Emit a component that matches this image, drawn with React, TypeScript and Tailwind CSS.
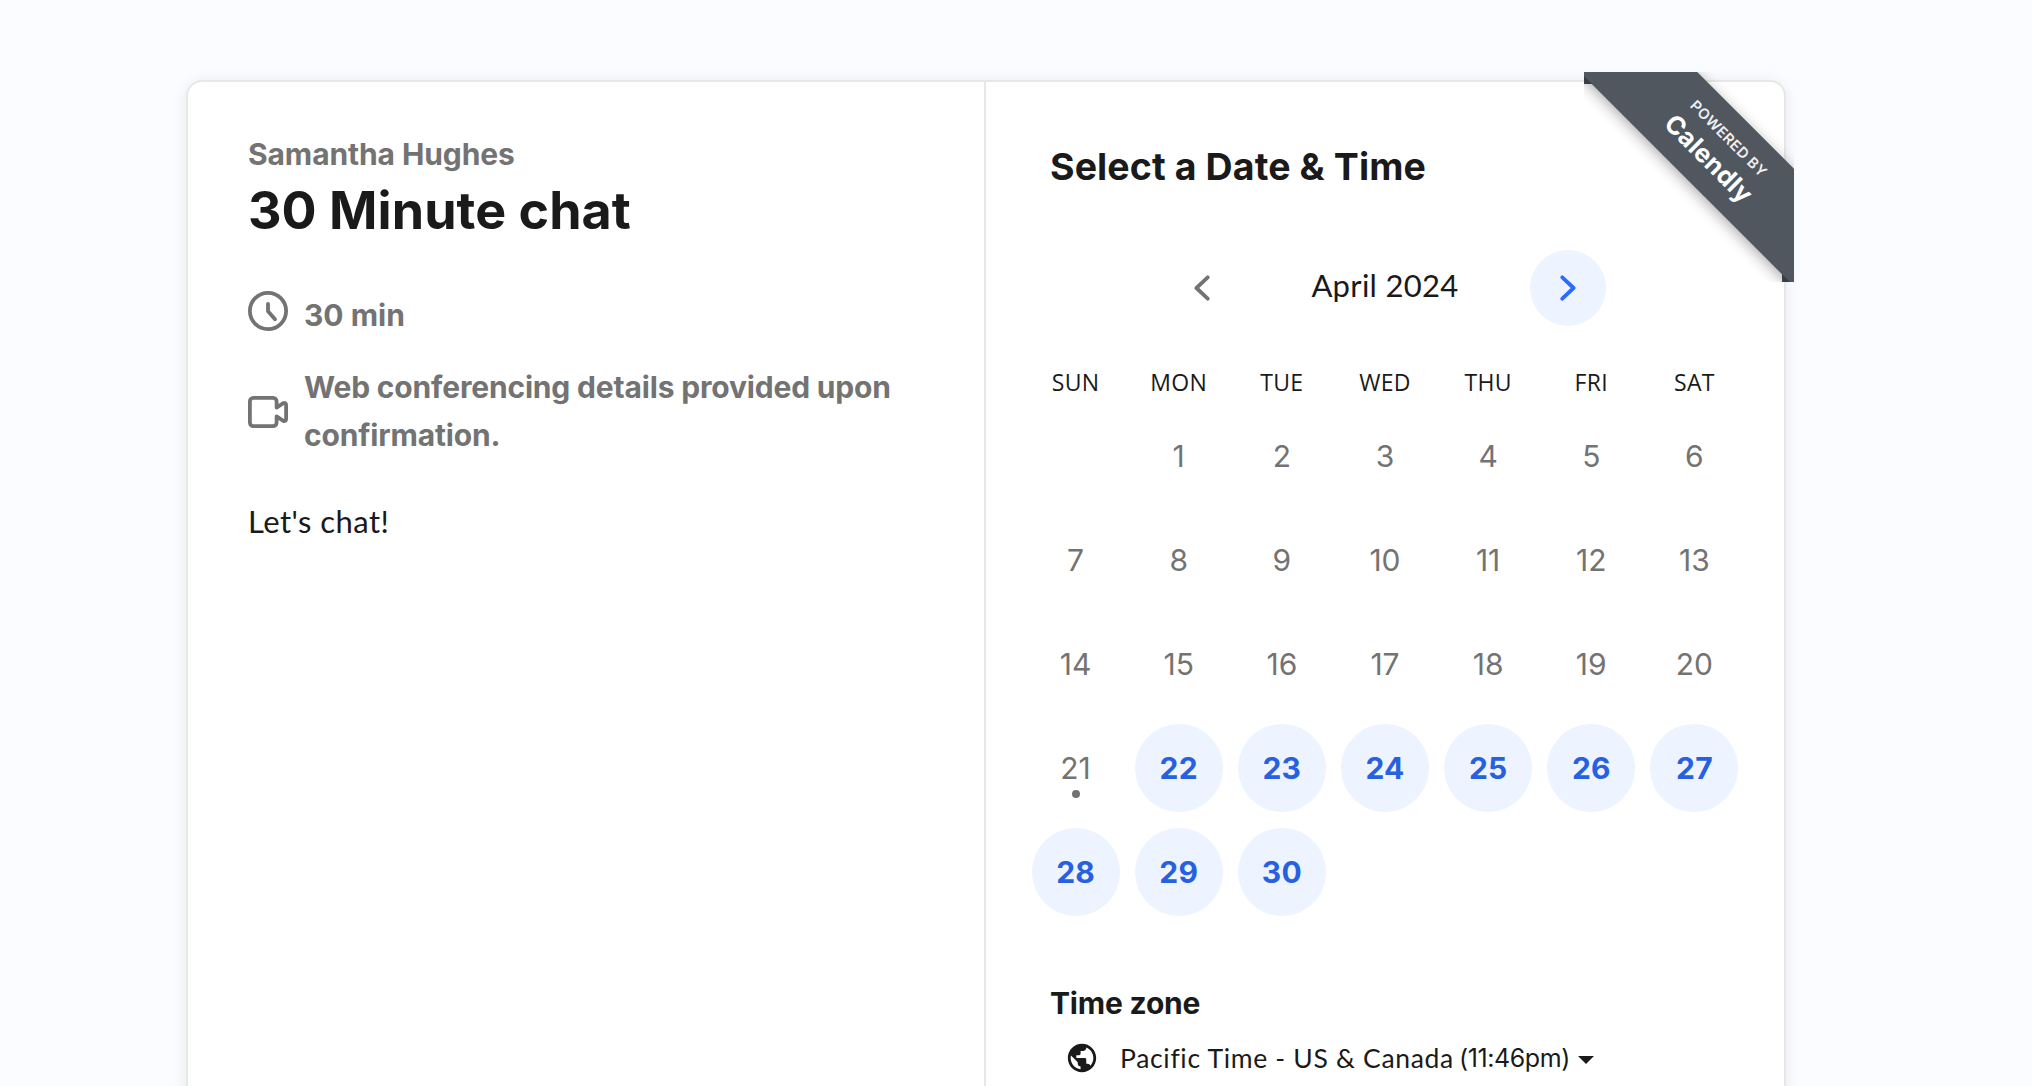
import React from "react";
import { MdPublic } from "react-icons/md";

const WEEKDAYS = ["SUN", "MON", "TUE", "WED", "THU", "FRI", "SAT"];
const DAYS = Array.from({ length: 30 }, (_, i) => i + 1);
const TODAY = 21;

function ClockIcon() {
  return (
    <svg className="size-10 shrink-0" viewBox="0 0 40 40" fill="none" stroke="currentColor" strokeWidth="3.8" strokeLinecap="round" strokeLinejoin="round">
      <circle cx="20" cy="20" r="18.1" />
      <path d="M20 13v7.2l7 8.1" />
    </svg>
  );
}

function VideoIcon() {
  return (
    <svg className="mt-[29px] size-10 shrink-0" viewBox="0 0 40 40" fill="none" stroke="currentColor" strokeWidth="3.8" strokeLinejoin="round">
      <path d="M5.4 5.9h19.7a3.5 3.5 0 0 1 3.5 3.5v6.2l6.7-4.4a1.8 1.8 0 0 1 2.8 1.5v14.6a1.8 1.8 0 0 1-2.8 1.5l-6.7-4.4v6.2a3.5 3.5 0 0 1-3.5 3.5H5.4a3.5 3.5 0 0 1-3.5-3.5V9.4a3.5 3.5 0 0 1 3.5-3.5z" />
    </svg>
  );
}

function Chevron({ flip = false }: { flip?: boolean }) {
  return (
    <svg className={flip ? "h-[26px] w-4 rotate-180" : "h-[26px] w-4"} viewBox="0 0 16 26" fill="none" stroke="currentColor" strokeWidth="3.8" strokeLinecap="round" strokeLinejoin="round">
      <path d="M2.3 2.3 13.6 13 2.3 23.7" />
    </svg>
  );
}

function Ribbon() {
  return (
    <div className="absolute -top-2.5 -right-2.5 size-[210px] overflow-hidden font-['Inter',sans-serif] text-white">
      <div className="absolute top-0 left-0 h-3 w-2 bg-[#474b54]" />
      <div className="absolute right-0 bottom-0 h-2 w-3 bg-[#474b54]" />
      <div className="absolute top-[36.6px] left-[-67.4px] flex h-[83px] w-[400px] rotate-45 flex-col items-center bg-[#50575e] shadow-[0_3px_14px_rgba(0,0,0,0.32)]">
        <div className="mt-[15px] h-5 text-[14.6px] leading-5 font-semibold tracking-[0.45px] whitespace-nowrap text-[#eef0f2]">POWERED BY</div>
        <div className="mt-[2px] h-8 text-[25.5px] leading-8 font-bold tracking-[0.3px]">Calendly</div>
      </div>
    </div>
  );
}

function Day({ day }: { day: number }) {
  const open = day > TODAY;
  return (
    <div className="flex h-[104px] items-center justify-center">
      <button
        className={
          open
            ? "relative size-[88px] rounded-full bg-[#edf4ff] text-[30px] font-bold tracking-[0.2px] text-[#2861df]"
            : "relative size-[88px] rounded-full text-[30px] font-normal text-[#737373]"
        }
      >
        {day}
        {day === TODAY && <span className="absolute bottom-3.5 left-10 size-2 rounded-full bg-[#737373]" />}
      </button>
    </div>
  );
}

function EventDetails() {
  return (
    <section className="w-[798px] shrink-0 border-r-2 border-[#e7e7e7] pt-[52px] pl-[60px]">
      <div className="font-['Inter',sans-serif] text-[30px] leading-10 font-bold tracking-[-0.1px] text-[#737373]">Samantha Hughes</div>
      <h1 className="mt-[7px] font-['Inter',sans-serif] text-[52px] leading-[60px] font-bold tracking-[0.05px]">30 Minute chat</h1>
      <div className="mt-[50px] flex gap-4 font-['Inter',sans-serif] text-[30px] leading-[48px] font-bold text-[#737373]">
        <ClockIcon />
        <span>30 min</span>
      </div>
      <div className="mt-6 flex gap-4 font-['Inter',sans-serif] text-[30px] leading-[48px] font-bold text-[#737373]">
        <VideoIcon />
        <span className="w-[620px] tracking-[-0.17px]">Web conferencing details provided upon confirmation.</span>
      </div>
      <p className="mt-[38px] text-[31px] leading-[48px] tracking-[0.45px]">Let's chat!</p>
    </section>
  );
}

function Scheduler() {
  return (
    <section className="flex-1 pt-[61px]">
      <h2 className="pl-16 font-['Inter',sans-serif] text-[37.5px] leading-[48px] font-bold tracking-[0.1px]">Select a Date &amp; Time</h2>
      <div className="mx-auto mt-[59px] flex h-[76px] w-[442px] items-center justify-between">
        <button className="flex size-[76px] items-center justify-center rounded-full text-[#737373]">
          <Chevron flip />
        </button>
        <span className="pb-1.5 text-[31px] tracking-[0.3px]">April 2024</span>
        <button className="flex size-[76px] items-center justify-center rounded-full bg-[#edf4ff] text-[#2b6bff]">
          <Chevron />
        </button>
      </div>
      <div className="mx-auto mt-10 grid w-[722px] grid-cols-7 text-center font-['Open_Sans',sans-serif] text-[23px] leading-8 tracking-[0.3px]">
        {WEEKDAYS.map((d) => (
          <div key={d}>{d}</div>
        ))}
      </div>
      <div className="mx-auto mt-1.5 grid w-[722px] grid-cols-7 font-['Inter',sans-serif]">
        <div />
        {DAYS.map((d) => (
          <Day key={d} day={d} />
        ))}
      </div>
      <h3 className="mt-[59px] pl-16 font-['Inter',sans-serif] text-[30px] leading-10 font-bold tracking-[-0.2px]">Time zone</h3>
      <button className="mt-[15px] flex h-10 items-center pl-[79px] text-[26.5px] leading-10">
        <MdPublic className="size-[34px]" />
        <span className="ml-[21px] tracking-[0.68px]">Pacific Time - US &amp; Canada</span>
        <span className="ml-[5px] font-['Inter',sans-serif] text-[25px] tracking-[-0.4px]">(11:46pm)</span>
        <svg className="mt-1 ml-2 h-2 w-4" viewBox="0 0 16 8" fill="currentColor">
          <path d="M0 0h16L8 8z" />
        </svg>
      </button>
    </section>
  );
}

export default function App() {
  return (
    <div className="h-[1086px] w-[2032px] overflow-hidden bg-[#fbfcff] pt-20 pl-[186px] font-['Lato',sans-serif] text-[#1a1a1a]">
      <main className="relative flex h-[1400px] w-[1600px] rounded-2xl border-2 border-[#e7e7e7] bg-white shadow-[0_2px_16px_rgba(0,0,0,0.08)]">
        <EventDetails />
        <Scheduler />
        <Ribbon />
      </main>
    </div>
  );
}
